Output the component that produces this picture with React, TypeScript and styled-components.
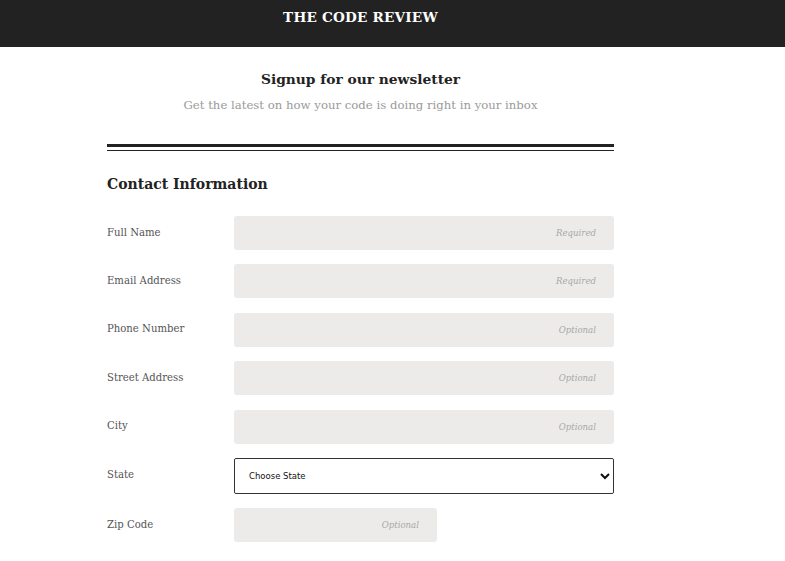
import React from "react";
import styled, { createGlobalStyle } from "styled-components";

const Global = createGlobalStyle`
  html, body { margin: 0; padding: 0; background: #fff; }
  body { font-family: "DejaVu Serif", "Liberation Serif", serif; color: #222; }
`;

const Header = styled.header`
  height: 47px;
  background: #222222;
`;

const Wrap = styled.div`
  width: 507px;
  margin-left: 107px;
`;

const Brand = styled.h1`
  margin: 0;
  padding-top: 7px;
  text-align: center;
  font-size: 13.6px;
  line-height: 20px;
  font-weight: bold;
  color: #fff;
  letter-spacing: 0.2px;
`;

const Intro = styled.div`
  text-align: center;
  padding-top: 22px;
`;

const Title = styled.h2`
  margin: 0;
  font-size: 13.8px;
  line-height: 20px;
  font-weight: bold;
  color: #222;
`;

const Subtitle = styled.p`
  margin: 8px 0 0;
  font-size: 11.7px;
  line-height: 16px;
  color: #9a9a9a;
`;

const Rule = styled.div`
  margin-top: 31px;
  border-top: 3px solid #222;
  border-bottom: 1px solid #222;
  height: 3px;
`;

const Section = styled.h3`
  margin: 23px 0 0;
  font-size: 14px;
  line-height: 20px;
  font-weight: bold;
  color: #222;
`;

const Form = styled.form`
  margin-top: 22px;
  display: flex;
  flex-direction: column;
  gap: 14.4px;
`;

const Row = styled.div`
  display: grid;
  grid-template-columns: 127px 1fr;
  align-items: center;
`;

const Label = styled.label`
  font-size: 10.1px;
  color: #555;
  margin-top: -2px;
`;

const Input = styled.input<{ $w?: number }>`
  box-sizing: border-box;
  width: ${(p) => (p.$w ? `${p.$w}px` : "100%")};
  height: 34px;
  border: none;
  border-radius: 3px;
  background: #ecebe9;
  padding: 0 18px;
  font-family: inherit;
  text-align: right;
  font-size: 8.6px;
  &::placeholder {
    color: #a8a8a8;
    font-style: italic;
  }
`;

const Select = styled.select`
  box-sizing: border-box;
  width: 100%;
  height: 36px;
  border: 1px solid #333;
  border-radius: 2px;
  background: #fff;
  padding: 0 8px 0 10px;
  font-family: "DejaVu Sans", "Liberation Sans", sans-serif;
  font-size: 8.5px;
  color: #111;
`;

const fields: { label: string; ph: string }[] = [
  { label: "Full Name", ph: "Required" },
  { label: "Email Address", ph: "Required" },
  { label: "Phone Number", ph: "Optional" },
  { label: "Street Address", ph: "Optional" },
  { label: "City", ph: "Optional" },
];

export default function App() {
  return (
    <>
      <Global />
      <Header>
        <Wrap>
          <Brand>THE CODE REVIEW</Brand>
        </Wrap>
      </Header>
      <Wrap>
        <Intro>
          <Title>Signup for our newsletter</Title>
          <Subtitle>Get the latest on how your code is doing right in your inbox</Subtitle>
        </Intro>
        <Rule />
        <Section>Contact Information</Section>
        <Form>
          {fields.map((f) => (
            <Row key={f.label}>
              <Label>{f.label}</Label>
              <Input placeholder={f.ph} />
            </Row>
          ))}
          <Row>
            <Label>State</Label>
            <Select defaultValue="">
              <option value="">Choose State</option>
            </Select>
          </Row>
          <Row>
            <Label>Zip Code</Label>
            <Input $w={203} placeholder="Optional" />
          </Row>
        </Form>
      </Wrap>
    </>
  );
}
